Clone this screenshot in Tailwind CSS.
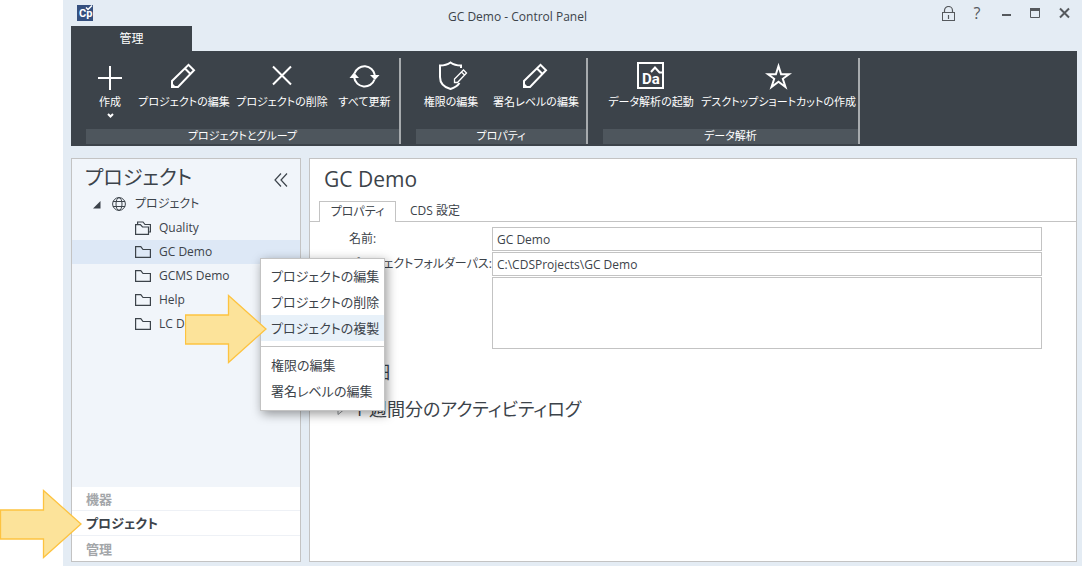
<!DOCTYPE html>
<html lang="ja">
<head>
<meta charset="utf-8">
<meta name="viewport" content="width=device-width, initial-scale=1">
<title>GC Demo - Control Panel</title>
<script src="https://cdn.jsdelivr.net/npm/@tailwindcss/browser@4"></script>
</head>
<body class="relative flex min-h-screen bg-white pl-[63px] font-['Open_Sans','Noto_Sans_CJK_JP',sans-serif] text-xs text-[#3c434a] [font-feature-settings:'palt']">

<div class="flex min-w-0 flex-1 flex-col bg-[#e4ecf4] pr-[5px] pb-1 pl-2">

  <!-- Title bar -->
  <header class="flex h-[26px] items-start">
    <svg class="mt-[5px] ml-[6px] h-4 w-4" viewBox="0 0 16 16" aria-label="Control Panel" role="img">
      <rect width="16" height="16" fill="#35507f"/>
      <text x="2" y="12" font-family="Roboto" font-weight="700" font-size="11" fill="#fff">Cp</text>
      <path d="M9 2.500l2 2L15 .5" fill="none" stroke="#fff" stroke-width="1.500"/>
    </svg>
    <h1 class="mt-[7px] min-w-0 flex-1 text-center text-xs leading-5">GC Demo - Control Panel</h1>
    <div class="mt-1 mr-[6px] flex h-[18px] items-center justify-end gap-[15px] text-[#55595d]">
      <button type="button" aria-label="ロック" class="h-[15px] w-[13px]">
        <svg viewBox="0 0 13 15" fill="none" stroke="currentColor"><rect x=".5" y="6.500" width="12" height="8"/><path d="M2.500 6V4.500a4 4 0 0 1 8 0V6M6.500 9v4" stroke-width="1.200"/></svg>
      </button>
      <button type="button" aria-label="ヘルプ" class="w-[14px] text-base leading-[18px]">?</button>
      <button type="button" aria-label="最小化" class="h-[14px] w-[14px]">
        <svg viewBox="0 0 14 14"><path d="M3 9h9" stroke="currentColor" stroke-width="2"/></svg>
      </button>
      <button type="button" aria-label="最大化" class="h-[14px] w-[14px]">
        <svg viewBox="0 0 14 14"><path d="M2.500 3v8.500h9V3" fill="none" stroke="currentColor"/><path d="M2 3.500h10" stroke="currentColor" stroke-width="3"/></svg>
      </button>
      <button type="button" aria-label="閉じる" class="h-[14px] w-[14px]">
        <svg viewBox="0 0 14 14"><path d="M3 2.500l9 9M12 2.500l-9 9" stroke="currentColor" stroke-width="2"/></svg>
      </button>
    </div>
  </header>

  <!-- Ribbon -->
  <div role="tablist">
    <button type="button" role="tab" aria-selected="true" class="block h-[25px] w-[121px] bg-[#3c434a] text-xs text-white">管理</button>
  </div>
  <div class="flex h-[95px] gap-[15px] bg-[#3c434a] pt-[7px] pb-[2px] pl-[15px] text-[11px] leading-4 text-white">
    <section class="flex flex-col justify-between border-r-2 border-[#a7abae]">
      <div class="flex">
        <button type="button" class="flex w-12 flex-col items-center whitespace-nowrap">
          <svg class="h-9 w-9" viewBox="0 0 36 36" stroke="#fff" stroke-width="2"><path d="M18 8v24M6 20h24"/></svg>
          <span>作成</span>
          <svg class="mt-[3px] h-[5px] w-[7px]" viewBox="0 0 7 5" fill="none" stroke="#fff" stroke-width="2"><path d="M1 1l2.500 2.500L6 1"/></svg>
        </button>
        <button type="button" class="flex w-[100px] flex-col items-center whitespace-nowrap">
          <svg class="h-9 w-9" viewBox="0 0 36 36" fill="none" stroke="#fff" stroke-width="2"><path d="M6 29v-6L22.500 6.800l5.500 5.500L12 29zM19 10.500l5 5"/><path d="M5 24l6 6H5z" fill="#fff" stroke="none"/></svg>
          <span>プロジェクトの編集</span>
        </button>
        <button type="button" class="flex w-24 flex-col items-center whitespace-nowrap">
          <svg class="h-9 w-9" viewBox="0 0 36 36" stroke="#fff" stroke-width="2"><path d="M9 8.500l18 18M27 8.500l-18 18"/></svg>
          <span>プロジェクトの削除</span>
        </button>
        <button type="button" class="flex w-[69px] flex-col items-center whitespace-nowrap">
          <svg class="h-9 w-9" viewBox="0 0 36 36" fill="none" stroke="#fff" stroke-width="2"><path d="M7.500 15.500a10.500 10.500 0 0 1 20.300 1.500M27.500 21.500a10.500 10.500 0 0 1-20.300-2"/><path d="M2.500 20l4.500-5.500 5 5.500zM23 17h9.500l-4.500 5z" fill="#fff" stroke="none"/></svg>
          <span>すべて更新</span>
        </button>
      </div>
      <h2 class="h-[15px] bg-[#4e565d] text-center leading-[14px]">プロジェクトとグループ</h2>
    </section>
    <section class="flex flex-col justify-between border-r-2 border-[#a7abae]">
      <div class="flex">
        <button type="button" class="flex w-[70px] flex-col items-center whitespace-nowrap">
          <svg class="h-9 w-9" viewBox="0 0 36 36" fill="none" stroke="#fff" stroke-width="2"><path d="M28 10V7.500c-4 0-7-.5-10.500-3C14 7 11 7.500 7 7.500V19c0 6.500 5 10.500 10.500 12 3.500-1 7-3 9-6"/><path d="M21.500 24.500v-3.500l9-9 3 3-9 9.500zM28.500 14l3 3" stroke-width="1.300"/></svg>
          <span>権限の編集</span>
        </button>
        <button type="button" class="flex w-[100px] flex-col items-center whitespace-nowrap">
          <svg class="h-9 w-9" viewBox="0 0 36 36" fill="none" stroke="#fff" stroke-width="2"><path d="M6 29v-6L22.500 6.800l5.500 5.500L12 29zM19 10.500l5 5"/><path d="M5 24l6 6H5z" fill="#fff" stroke="none"/></svg>
          <span>署名レベルの編集</span>
        </button>
      </div>
      <h2 class="h-[15px] bg-[#4e565d] text-center leading-[14px]">プロパティ</h2>
    </section>
    <section class="flex flex-col justify-between border-r-2 border-[#a7abae]">
      <div class="flex">
        <button type="button" class="flex w-24 flex-col items-center whitespace-nowrap">
          <svg class="h-9 w-9" viewBox="0 0 36 36" fill="none" stroke="#fff" stroke-width="2"><path d="M5 5h25v25H5z"/><text x="9" y="26" font-family="Roboto" font-weight="700" font-size="15" fill="#fff" stroke="none">Da</text><path d="M18 14l4-4.500 4.500 5H30"/></svg>
          <span>データ解析の起動</span>
        </button>
        <button type="button" class="flex w-[159px] flex-col items-center whitespace-nowrap">
          <svg class="h-9 w-9" viewBox="0 0 36 36" fill="none" stroke="#fff" stroke-width="2"><path d="M17.500 8l2.600 8.200H28l-6.200 4.600 2.700 8.200-7-5.200-7 5.200 2.700-8.200L7 16.200h7.900z"/></svg>
          <span>デスクトップショートカットの作成</span>
        </button>
      </div>
      <h2 class="h-[15px] bg-[#4e565d] text-center leading-[14px]">データ解析</h2>
    </section>
  </div>

  <div class="mt-3 flex flex-1 gap-2">

    <!-- Navigation pane -->
    <aside class="flex w-[230px] shrink-0 flex-col border border-[#c3c3c3] bg-[#f1f5fa]">
      <div class="flex h-[33px] items-center justify-between pt-1 pr-3 pl-[13px]">
        <h2 class="text-[20px] leading-8">プロジェクト</h2>
        <button type="button" aria-label="パネルを折りたたむ" class="mt-1 h-[14px] w-[14px]">
          <svg viewBox="0 0 14 14" fill="none" stroke="currentColor" stroke-width="1.200"><path d="M7 .5L1 7l6 6.500M13 .5L7 7l6 6.500"/></svg>
        </button>
      </div>
      <ul role="tree" class="leading-6">
        <li role="treeitem" aria-expanded="true">
          <div class="flex h-6 items-center pl-5">
            <svg class="h-[9px] w-[9px]" viewBox="0 0 9 9"><path d="M8.500 1v7.500H1z" fill="#3c434a"/></svg>
            <svg class="ml-[11px] h-[14px] w-[14px]" viewBox="0 0 14 14" fill="none" stroke="#3c434a"><circle cx="7" cy="7" r="6.400"/><ellipse cx="7" cy="7" rx="3" ry="6.400"/><path d="M1 4.500h12M1 9.500h12"/></svg>
            <span class="ml-[9px]">プロジェクト</span>
          </div>
          <ul role="group">
            <li role="treeitem" class="flex h-6 items-center gap-2 pl-[63px]">
              <svg class="h-[14px] w-4" viewBox="0 0 16 14" fill="none" stroke="#3c434a" stroke-width="1.200"><path d="M.6 13.400V3.600h4.800L7.500 6h6v7.400zM2.600 3.500V1H8l2 2.500h5.400V11h-2"/></svg>Quality</li>
            <li role="treeitem" aria-selected="true" class="flex h-6 items-center gap-2 bg-[#dde8f6] pl-[63px]">
              <svg class="h-[14px] w-4" viewBox="0 0 16 14" fill="none" stroke="#3c434a" stroke-width="1.200"><path d="M.6 12.400V1.600h5.200L8 4.500h7.400v7.900z"/></svg>GC Demo</li>
            <li role="treeitem" class="flex h-6 items-center gap-2 pl-[63px]">
              <svg class="h-[14px] w-4" viewBox="0 0 16 14" fill="none" stroke="#3c434a" stroke-width="1.200"><path d="M.6 12.400V1.600h5.200L8 4.500h7.400v7.900z"/></svg>GCMS Demo</li>
            <li role="treeitem" class="flex h-6 items-center gap-2 pl-[63px]">
              <svg class="h-[14px] w-4" viewBox="0 0 16 14" fill="none" stroke="#3c434a" stroke-width="1.200"><path d="M.6 12.400V1.600h5.200L8 4.500h7.400v7.900z"/></svg>Help</li>
            <li role="treeitem" class="flex h-6 items-center gap-2 pl-[63px]">
              <svg class="h-[14px] w-4" viewBox="0 0 16 14" fill="none" stroke="#3c434a" stroke-width="1.200"><path d="M.6 12.400V1.600h5.200L8 4.500h7.400v7.900z"/></svg>LC Demo</li>
          </ul>
        </li>
      </ul>
      <nav class="mt-auto flex flex-col divide-y divide-[#eef1f6] bg-white text-[13px] leading-5 font-bold text-[#a3a6a9]">
        <button type="button" class="h-6 pl-[14px] text-left">機器</button>
        <button type="button" aria-current="page" class="h-[25px] pl-[14px] text-left text-[#3c434a]">プロジェクト</button>
        <button type="button" class="h-[25px] pl-[14px] text-left">管理</button>
      </nav>
    </aside>

    <!-- Project details -->
    <main class="min-w-0 flex-1 border border-[#c3c3c3] bg-white">
      <h2 class="px-[14px] pt-1 text-[21px] leading-8">GC Demo</h2>
      <div role="tablist" class="mt-[5px] flex h-[22px] items-end border-b border-[#c3c3c3] pl-[9px]">
        <button type="button" role="tab" aria-selected="true" class="-mb-px h-[21px] w-[77px] border border-b-0 border-[#c3c3c3] bg-white leading-4">プロパティ</button>
        <button type="button" role="tab" aria-selected="false" class="h-[21px] px-[14px] leading-4">CDS 設定</button>
      </div>
      <form class="grid grid-cols-[143px_1fr] gap-y-px pt-[5px] pr-[34px] pl-[39px]">
        <label for="name" class="leading-6 whitespace-nowrap">名前:</label>
        <input id="name" type="text" value="GC Demo" class="h-6 w-full border border-[#c3c3c3] px-1 text-xs">
        <label for="path" class="leading-6 whitespace-nowrap">プロジェクトフォルダーパス:</label>
        <input id="path" type="text" value="C:\CDSProjects\GC Demo" class="h-6 w-full border border-[#c3c3c3] px-1 text-xs">
        <label for="desc" class="leading-6 whitespace-nowrap">説明:</label>
        <textarea id="desc" class="block h-[72px] w-full resize-none border border-[#c3c3c3] px-1 text-xs"></textarea>
      </form>
      <div class="mt-[5px] pl-[27px] text-[18px] leading-[37px]">
        <button type="button" aria-expanded="false" class="flex items-center gap-[9px]">
          <svg class="h-3 w-2" viewBox="0 0 8 12" fill="none" stroke="#8b8f93"><path d="M1 1.500L6.500 6 1 10.500z"/></svg>詳細</button>
        <button type="button" aria-expanded="false" class="flex items-center gap-[9px]">
          <svg class="h-3 w-2" viewBox="0 0 8 12" fill="none" stroke="#8b8f93"><path d="M1 1.500L6.500 6 1 10.500z"/></svg>1 週間分のアクティビティログ</button>
      </div>
    </main>
  </div>
</div>

<!-- Context menu of the selected project -->
<div role="menu" class="absolute top-[258px] left-[260px] flex w-[125px] flex-col border border-[#c3c3c3] bg-white pt-1 pb-[6px] text-[13px] leading-[26px] whitespace-nowrap shadow-[2px_3px_10px_rgba(0,0,0,0.4)]">
  <button type="button" role="menuitem" class="h-[26px] pl-[10px] text-left">プロジェクトの編集</button>
  <button type="button" role="menuitem" class="h-[26px] pl-[10px] text-left">プロジェクトの削除</button>
  <button type="button" role="menuitem" class="h-[26px] bg-[#e8f1f9] pl-[10px] text-left">プロジェクトの複製</button>
  <hr class="my-[5px] border-[#c3c3c3]">
  <button type="button" role="menuitem" class="h-[26px] pl-[10px] text-left">権限の編集</button>
  <button type="button" role="menuitem" class="h-[26px] pl-[10px] text-left">署名レベルの編集</button>
</div>

<!-- Callout arrows -->
<svg class="absolute top-[294px] left-[185px] h-[70px] w-[82px]" viewBox="0 0 82 70" aria-hidden="true"><path d="M.5 21h43V1.500L81 35 43.500 68.500V50H.5z" fill="#fce39a" stroke="#fdc340" stroke-width="1.300"/></svg>
<svg class="absolute bottom-[7px] left-0 h-[70px] w-[82px]" viewBox="0 0 82 70" aria-hidden="true"><path d="M.5 21h43V1.500L81 35 43.500 68.500V50H.5z" fill="#fce39a" stroke="#fdc340" stroke-width="1.300"/></svg>

</body>
</html>
